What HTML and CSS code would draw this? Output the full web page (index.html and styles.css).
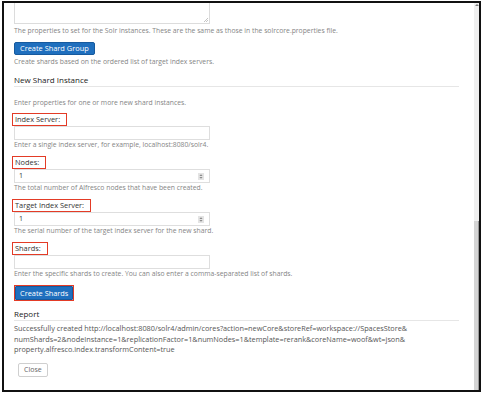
FILE: index.html
```html
<!DOCTYPE html>
<html lang="en">
<head>
<meta charset="utf-8">
<title>New Shard Instance</title>
<link rel="stylesheet" href="styles.css">
</head>
<body>
<div class="frame">
  <div class="content">
    <div class="textarea-stub">
      <svg class="grip" width="5" height="5" viewBox="0 0 5 5"><path d="M1 5 L5 1 M3 5 L5 3" stroke="#b5b5b5" stroke-width="0.8" fill="none"/></svg>
    </div>
    <p class="hint hint-top">The properties to set for the Solr instances. These are the same as those in the solrcore.properties file.</p>
    <button class="btn btn-primary btn-group">Create Shard Group</button>
    <p class="hint hint-after-btn">Create shards based on the ordered list of target index servers.</p>
    <h3 class="section-title">New Shard Instance</h3>
    <p class="hint hint-intro">Enter properties for one or more new shard instances.</p>

    <div class="field">
      <span class="label-box">Index Server:</span>
      <div class="input"></div>
      <p class="hint">Enter a single index server, for example, localhost:8080/solr4.</p>
    </div>
    <div class="field">
      <span class="label-box">Nodes:</span>
      <div class="input input-number"><span class="value">1</span>
        <svg class="spin" width="6" height="7" viewBox="0 0 6 7"><rect x="0" y="0" width="6" height="7" fill="#e4e4e4"/><path d="M1.4 3 L3 1.2 L4.6 3 Z M1.4 4 L3 5.8 L4.6 4 Z" fill="#8a8a8a"/></svg>
      </div>
      <p class="hint">The total number of Alfresco nodes that have been created.</p>
    </div>
    <div class="field">
      <span class="label-box">Target Index Server:</span>
      <div class="input input-number"><span class="value">1</span>
        <svg class="spin" width="6" height="7" viewBox="0 0 6 7"><rect x="0" y="0" width="6" height="7" fill="#e4e4e4"/><path d="M1.4 3 L3 1.2 L4.6 3 Z M1.4 4 L3 5.8 L4.6 4 Z" fill="#8a8a8a"/></svg>
      </div>
      <p class="hint">The serial number of the target index server for the new shard.</p>
    </div>
    <div class="field">
      <span class="label-box">Shards:</span>
      <div class="input"></div>
      <p class="hint">Enter the specific shards to create. You can also enter a comma-separated list of shards.</p>
    </div>

    <div class="btn-mark">
      <button class="btn btn-primary btn-shards">Create Shards</button>
    </div>

    <h3 class="section-title report-title">Report</h3>
    <p class="report">Successfully created http://localhost:8080/solr4/admin/cores?action=newCore&amp;storeRef=workspace://SpacesStore&amp;<br>numShards=2&amp;nodeInstance=1&amp;replicationFactor=1&amp;numNodes=1&amp;template=rerank&amp;coreName=woof&amp;wt=json&amp;<br>property.alfresco.index.transformContent=true</p>
    <button class="btn btn-close">Close</button>
  </div>
  <div class="scrollbar">
    <div class="scroll-arrow"></div>
    <div class="thumb"></div>
  </div>
</div>
</body>
</html>
```
FILE: styles.css
```css
html, body {
  margin: 0;
  padding: 0;
  background: #ffffff;
}
body {
  font-family: "Open Sans", "DejaVu Sans", sans-serif;
  color: #333;
}
.frame {
  margin: 1px 1px 2px 2px;
  height: 391px;
  box-sizing: border-box;
  border: 2px solid #111;
  display: flex;
  overflow: hidden;
  background: #fff;
}
.content {
  flex: 1;
  min-width: 0;
  padding: 0 15px 0 10px;
  display: flex;
  flex-direction: column;
  align-items: stretch;
}
.textarea-stub {
  width: 196px;
  height: 21px;
  flex: none;
  box-sizing: border-box;
  border: 1px solid #dcdcdc;
  border-top: none;
  display: flex;
  justify-content: flex-end;
  align-items: flex-end;
}
.grip {
  display: block;
  margin: 0 1px 1px 0;
}
.hint {
  margin: 0;
  font-size: 6.8px;
  line-height: 10px;
  color: #858585;
  white-space: nowrap;
}
.hint-top { margin-top: 2px; }
.hint-after-btn { margin-top: 2px; }
.hint-intro { margin-top: 11px; }
.btn {
  display: block;
  font-family: "Open Sans", "DejaVu Sans", sans-serif;
  box-sizing: border-box;
  border-radius: 2px;
  margin: 0;
  cursor: pointer;
  align-self: flex-start;
}
.btn-primary {
  background: #1f6fbe;
  border: 1px solid #165a9e;
  color: #fff;
  font-size: 7.4px;
  line-height: 11px;
  height: 13px;
  padding: 0 5px;
}
.btn-group {
  margin-top: 6px;
}
.section-title {
  margin: 7px 0 0 0;
  font-size: 8px;
  line-height: 11px;
  font-weight: normal;
  color: #222;
  padding-bottom: 1px;
  border-bottom: 1px solid #e6e6e6;
}
.field {
  margin-top: 5px;
  display: flex;
  flex-direction: column;
  align-items: flex-start;
}
.field + .field {
  margin-top: 6px;
}
.label-box {
  display: block;
  margin-left: -2px;
  padding: 0 6px 0 2px;
  border: 1px solid #e33b26;
  font-size: 7.4px;
  line-height: 11px;
  color: #333;
}
.input {
  width: 196px;
  height: 14px;
  box-sizing: border-box;
  border: 1px solid #dedede;
  background: #fff;
  display: flex;
  align-items: center;
  padding: 0 4px;
}
.input-number {
  justify-content: space-between;
}
.input .value {
  font-size: 7px;
  color: #333;
  line-height: 12px;
}
.spin {
  display: block;
  margin-right: 1px;
}
.btn-mark {
  margin-top: 6px;
  align-self: flex-start;
  display: flex;
  border: 1px solid #e33b26;
}
.btn-shards {
  height: 14px;
  line-height: 12px;
  padding: 0 4px;
  border-radius: 1px;
}
.report-title {
  margin-top: 7px;
}
.report {
  margin: 2px 0 0 0;
  font-size: 7.3px;
  line-height: 10.5px;
  color: #555;
  white-space: nowrap;
}
.btn-close {
  margin: 8px 0 0 4px;
  height: 14px;
  padding: 0 5px;
  background: #fff;
  border: 1px solid #cfcfcf;
  color: #666;
  font-size: 7px;
  line-height: 12px;
}
.scrollbar {
  width: 5px;
  background: #efefef;
  display: flex;
  flex-direction: column;
  align-items: center;
}
.scroll-arrow {
  margin-top: 1px;
  width: 0;
  height: 0;
  border-left: 2px solid transparent;
  border-right: 2px solid transparent;
  border-bottom: 2px solid #777;
}
.thumb {
  margin-top: 215px;
  flex: 1;
  align-self: stretch;
  background: #d4d4d4;
  border-right: 1px solid #9a9a9a;
}
```
